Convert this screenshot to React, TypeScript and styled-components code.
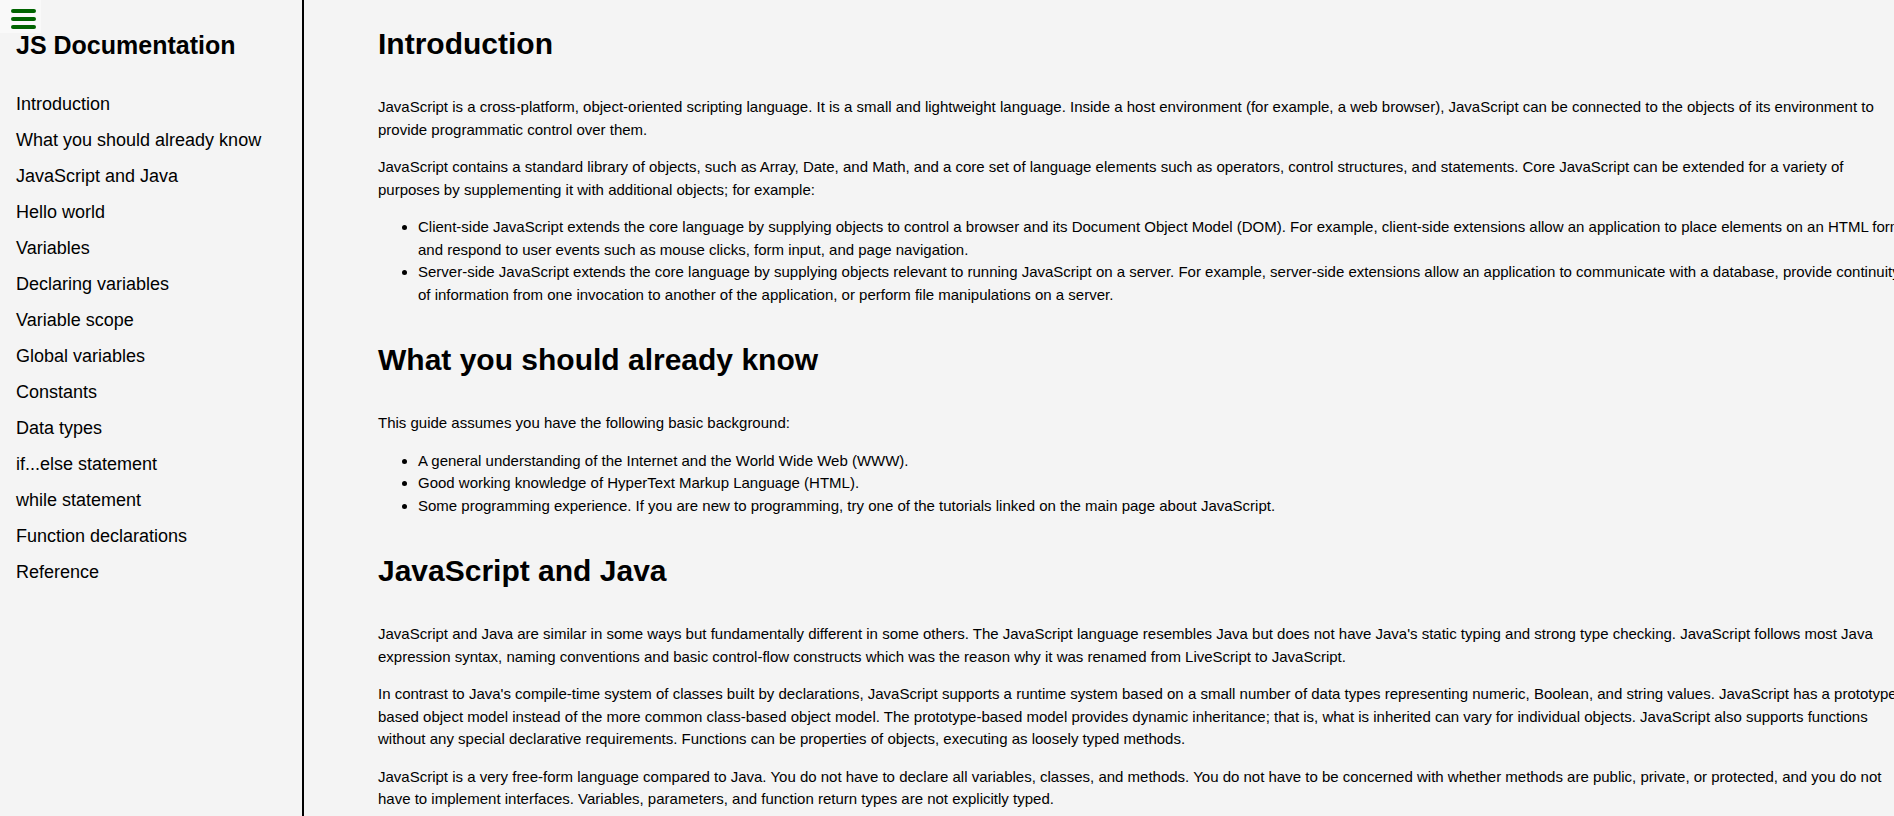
import React from "react";
import styled, { createGlobalStyle } from "styled-components";

const GlobalStyle = createGlobalStyle`
  html, body {
    margin: 0;
    padding: 0;
    overflow: hidden;
    background: #f4f4f4;
  }
  body {
    font-family: "Liberation Sans", Arial, sans-serif;
    color: #000;
  }
  * { box-sizing: border-box; }
`;

const Layout = styled.div`
  display: flex;
  align-items: flex-start;
  width: 100%;
  min-height: 100vh;
`;

const Nav = styled.nav`
  flex: 0 0 304px;
  height: 100vh;
  position: sticky;
  top: 0;
  display: flex;
  flex-direction: column;
  border-right: 2px solid #000;
  background: #f4f4f4;
`;

const MenuButton = styled.button`
  width: 41px;
  height: 33px;
  padding: 9px 0 0 11px;
  border: none;
  background: #f9f9f9;
  display: flex;
  flex-direction: column;
  gap: 4px;
  cursor: pointer;
`;

const Bar = styled.span`
  display: block;
  width: 25px;
  height: 4px;
  border-radius: 2px;
  background: #006400;
`;

const NavTitle = styled.header`
  margin: 0 0 0 16px;
  font-size: 25px;
  line-height: 25px;
  font-weight: 700;
`;

const NavList = styled.ul`
  list-style: none;
  margin: 28px 0 0;
  padding: 0;
`;

const NavLink = styled.a`
  display: block;
  padding-left: 16px;
  font-size: 18px;
  line-height: 36px;
  color: #000;
  text-decoration: none;
`;

const Main = styled.main`
  flex: 0 0 1529px;
  margin-left: 74px;
  font-size: 15px;
  line-height: 22.5px;
`;

const Section = styled.section``;

const Heading = styled.header<{ $first?: boolean }>`
  margin: ${(p) => (p.$first ? "27px" : "37px")} 0 35px;
  font-size: 30px;
  line-height: 34px;
  font-weight: 700;
`;

const Para = styled.p`
  margin: 15px 0;
`;

const List = styled.ul`
  margin: 15px 0;
  padding-left: 40px;
`;

const Code = styled.pre`
  margin: 15px 0;
  padding: 12px 16px;
  background: #e8e8e8;
  font-family: "Liberation Mono", monospace;
  font-size: 14px;
  line-height: 20px;
`;

type Block =
  | { kind: "p"; text: string }
  | { kind: "ul"; items: string[] }
  | { kind: "code"; text: string };

const sections: { title: string; blocks: Block[] }[] = [
  {
    title: "Introduction",
    blocks: [
      {
        kind: "p",
        text: "JavaScript is a cross-platform, object-oriented scripting language. It is a small and lightweight language. Inside a host environment (for example, a web browser), JavaScript can be connected to the objects of its environment to provide programmatic control over them.",
      },
      {
        kind: "p",
        text: "JavaScript contains a standard library of objects, such as Array, Date, and Math, and a core set of language elements such as operators, control structures, and statements. Core JavaScript can be extended for a variety of purposes by supplementing it with additional objects; for example:",
      },
      {
        kind: "ul",
        items: [
          "Client-side JavaScript extends the core language by supplying objects to control a browser and its Document Object Model (DOM). For example, client-side extensions allow an application to place elements on an HTML form and respond to user events such as mouse clicks, form input, and page navigation.",
          "Server-side JavaScript extends the core language by supplying objects relevant to running JavaScript on a server. For example, server-side extensions allow an application to communicate with a database, provide continuity of information from one invocation to another of the application, or perform file manipulations on a server.",
        ],
      },
    ],
  },
  {
    title: "What you should already know",
    blocks: [
      { kind: "p", text: "This guide assumes you have the following basic background:" },
      {
        kind: "ul",
        items: [
          "A general understanding of the Internet and the World Wide Web (WWW).",
          "Good working knowledge of HyperText Markup Language (HTML).",
          "Some programming experience. If you are new to programming, try one of the tutorials linked on the main page about JavaScript.",
        ],
      },
    ],
  },
  {
    title: "JavaScript and Java",
    blocks: [
      {
        kind: "p",
        text: "JavaScript and Java are similar in some ways but fundamentally different in some others. The JavaScript language resembles Java but does not have Java's static typing and strong type checking. JavaScript follows most Java expression syntax, naming conventions and basic control-flow constructs which was the reason why it was renamed from LiveScript to JavaScript.",
      },
      {
        kind: "p",
        text: "In contrast to Java's compile-time system of classes built by declarations, JavaScript supports a runtime system based on a small number of data types representing numeric, Boolean, and string values. JavaScript has a prototype-based object model instead of the more common class-based object model. The prototype-based model provides dynamic inheritance; that is, what is inherited can vary for individual objects. JavaScript also supports functions without any special declarative requirements. Functions can be properties of objects, executing as loosely typed methods.",
      },
      {
        kind: "p",
        text: "JavaScript is a very free-form language compared to Java. You do not have to declare all variables, classes, and methods. You do not have to be concerned with whether methods are public, private, or protected, and you do not have to implement interfaces. Variables, parameters, and function return types are not explicitly typed.",
      },
    ],
  },
  {
    title: "Hello world",
    blocks: [
      {
        kind: "p",
        text: "To get started with writing JavaScript, open the Scratchpad and write your first \"Hello world\" JavaScript code:",
      },
      { kind: "code", text: "function greetMe(yourName) { alert(\"Hello \" + yourName); }\ngreetMe(\"World\");" },
    ],
  },
  {
    title: "Variables",
    blocks: [
      {
        kind: "p",
        text: "You use variables as symbolic names for values in your application. The names of variables, called identifiers, conform to certain rules.",
      },
    ],
  },
];

const navItems = [
  "Introduction",
  "What you should already know",
  "JavaScript and Java",
  "Hello world",
  "Variables",
  "Declaring variables",
  "Variable scope",
  "Global variables",
  "Constants",
  "Data types",
  "if...else statement",
  "while statement",
  "Function declarations",
  "Reference",
];

const slug = (s: string) => s.replace(/[^A-Za-z]+/g, "_");

export default function App() {
  return (
    <>
      <GlobalStyle />
      <Layout>
        <Nav id="navbar">
          <MenuButton aria-label="Toggle menu">
            <Bar />
            <Bar />
            <Bar />
          </MenuButton>
          <NavTitle>JS Documentation</NavTitle>
          <NavList>
            {navItems.map((item) => (
              <li key={item}>
                <NavLink href={`#${slug(item)}`}>{item}</NavLink>
              </li>
            ))}
          </NavList>
        </Nav>
        <Main id="main-doc">
          {sections.map((s, i) => (
            <Section key={s.title} id={slug(s.title)}>
              <Heading $first={i === 0}>{s.title}</Heading>
              {s.blocks.map((b, j) =>
                b.kind === "p" ? (
                  <Para key={j}>{b.text}</Para>
                ) : b.kind === "ul" ? (
                  <List key={j}>
                    {b.items.map((it) => (
                      <li key={it}>{it}</li>
                    ))}
                  </List>
                ) : (
                  <Code key={j}>{b.text}</Code>
                )
              )}
            </Section>
          ))}
        </Main>
      </Layout>
    </>
  );
}
